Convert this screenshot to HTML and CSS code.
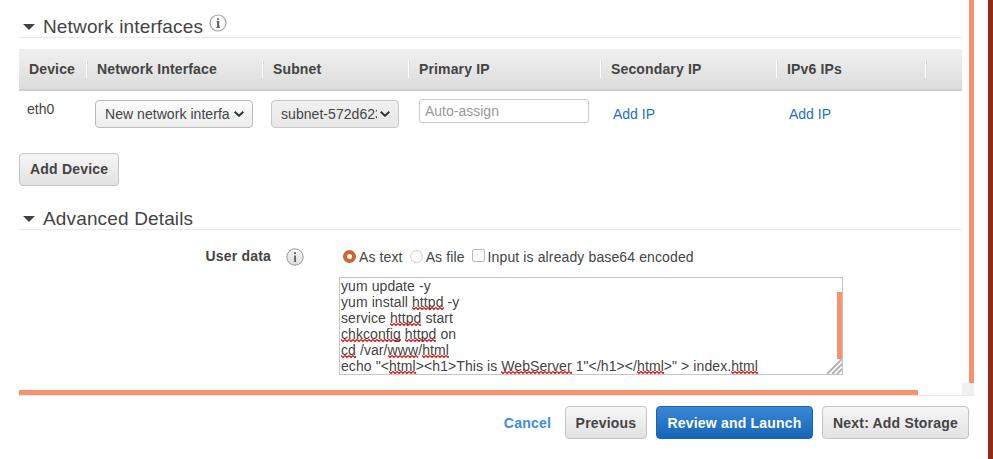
FILE: index.html
```html
<!DOCTYPE html>
<html lang="en">
<head>
<meta charset="utf-8">
<title>Configure Instance</title>
<link rel="stylesheet" href="styles.css">
</head>
<body>
<div class="edge"></div>
<main class="panel">
  <div class="content">
    <section class="net">
      <h2 class="section-title">
        <svg class="caret" width="12" height="6" viewBox="0 0 12 6"><path d="M0 0H12L6 6Z" fill="#444"/></svg>
        <span>Network interfaces</span>
        <svg class="title-info" width="18" height="18" viewBox="0 0 18 18"><circle cx="9" cy="9" r="8" fill="#fff" stroke="#a0a0a0" stroke-width="1.2"/><path d="M7.5 7.5H9.7V13.2H10.7M7.4 13.4H10.7" fill="none" stroke="#555" stroke-width="1"/><rect x="8.2" y="7.5" width="1.6" height="6" fill="#555"/><rect x="8.2" y="4.2" width="1.6" height="1.8" fill="#555"/></svg>
      </h2>
      <div class="grid head">
        <div class="th">Device</div>
        <div class="th sep">Network Interface</div>
        <div class="th sep">Subnet</div>
        <div class="th sep">Primary IP</div>
        <div class="th sep">Secondary IP</div>
        <div class="th sep">IPv6 IPs</div>
        <div class="th sep"></div>
      </div>
      <div class="grid row">
        <div class="td device">eth0</div>
        <div class="td"><select class="sel sel-net"><option>New network interface</option></select></div>
        <div class="td"><select class="sel sel-sub"><option>subnet-572d6231</option></select></div>
        <div class="td"><input class="ip" type="text" placeholder="Auto-assign"></div>
        <div class="td link-cell"><a class="link" href="#">Add IP</a></div>
        <div class="td link-cell"><a class="link" href="#">Add IP</a></div>
      </div>
      <button class="btn add-device" type="button">Add Device</button>
    </section>
    <section class="adv">
      <h2 class="section-title">
        <svg class="caret" width="12" height="6" viewBox="0 0 12 6"><path d="M0 0H12L6 6Z" fill="#444"/></svg>
        <span>Advanced Details</span>
      </h2>
      <div class="user-row">
        <div class="user-label">User data</div>
        <svg class="user-info" width="18" height="18" viewBox="0 0 18 18"><defs><linearGradient id="g" x1="0" y1="0" x2="0" y2="1"><stop offset="0" stop-color="#f6f6f6"/><stop offset="1" stop-color="#dcdcdc"/></linearGradient></defs><circle cx="9" cy="9" r="8.2" fill="url(#g)" stroke="#999"/><rect x="8.2" y="7.5" width="1.7" height="6.5" fill="#555"/><rect x="8.2" y="4.2" width="1.7" height="1.8" fill="#555"/></svg>
        <div class="user-main">
          <div class="choices">
            <span class="radio on"></span><span class="choice">As text</span>
            <span class="radio"></span><span class="choice">As file</span>
            <span class="check"></span><span class="choice">Input is already base64 encoded</span>
          </div>
          <div class="area">
            <div>yum update -y</div>
            <div>yum install <u>httpd</u> -y</div>
            <div>service <u>httpd</u> start</div>
            <div><u>chkconfig</u> <u>httpd</u> on</div>
            <div><u>cd</u> /var/<u>www</u>/<u>html</u></div>
            <div>echo "&lt;<u>html</u>&gt;&lt;h1&gt;This is <u>WebServer</u> 1"&lt;/h1&gt;&lt;/<u>html</u>&gt;" &gt; index.<u>html</u></div>
            <span class="area-thumb"></span>
            <svg class="resizer" width="15" height="15" viewBox="0 0 15 15"><path d="M15 0L0 15M15 5L5 15M15 10L10 15" stroke="#b4b4b4" stroke-width="2"/></svg>
          </div>
        </div>
      </div>
    </section>
  </div>
  <span class="vbar"></span>
  <span class="hbar"></span>
  <span class="corner"></span>
</main>
<footer class="actions">
  <a class="cancel" href="#">Cancel</a>
  <button class="btn prev" type="button">Previous</button>
  <button class="btn primary" type="button">Review and Launch</button>
  <button class="btn" type="button">Next: Add Storage</button>
</footer>
</body>
</html>
```
FILE: styles.css
```css
* { box-sizing: border-box; }
html, body { margin: 0; height: 100%; }
body {
  width: 993px;
  height: 459px;
  overflow: hidden;
  position: relative;
  background: #fff;
  color: #444;
  font: 14px/16px "Liberation Sans", Arial, sans-serif;
}
.edge {
  position: absolute;
  top: 0;
  right: 0;
  bottom: 0;
  width: 5px;
  background: #952c18;
}
.panel {
  position: relative;
  width: 974px;
  height: 396px;
  padding-left: 19px;
  overflow: hidden;
}
.panel::after {
  content: "";
  position: absolute;
  left: 19px;
  right: 0;
  bottom: 0;
  height: 1px;
  background: #e8e8e8;
}
.content { width: 943px; }
.section-title {
  display: flex;
  align-items: center;
  height: 38px;
  margin: 0;
  padding: 16px 0 0 4px;
  border-bottom: 1px solid #eaeaea;
  font-size: 19px;
  font-weight: 400;
  line-height: 22px;
  letter-spacing: .15px;
  color: #444;
}
.caret { margin: 0 8px 0 0; flex: none; }
.title-info { margin: -7px 0 0 6px; }
.grid {
  display: grid;
  grid-template-columns: 67px 176px 146px 192px 176px 149px 37px;
}
.head {
  height: 42px;
  margin-top: 11px;
  align-items: center;
  background: linear-gradient(#f0f0f0, #dcdcdc);
  border-bottom: 2px solid #cfcfcf;
}
.th {
  height: 18px;
  padding-left: 10px;
  font-weight: 700;
  line-height: 18px;
  color: #444;
  white-space: nowrap;
  letter-spacing: .14px;
}
.sep { padding-left: 10px; border-left: 1px solid #fff; box-shadow: inset 1px 0 0 #ddd; }
.row { height: 62px; padding-top: 8px; }
.td { padding-left: 9px; }
.device { padding: 2px 0 0 8px; }
.sel {
  display: block;
  appearance: none;
  -webkit-appearance: none;
  height: 28px;
  margin-top: 1px;
  padding: 0 22px 0 9px;
  border: 1px solid #bbb;
  border-radius: 4px;
  background-color: #f4f4f4;
  background-image: url("data:image/svg+xml,%3Csvg xmlns='http://www.w3.org/2000/svg' width='10' height='6' viewBox='0 0 10 6'%3E%3Cpath d='M.7 .7L5 4.8L9.3 .7' fill='none' stroke='%23333' stroke-width='1.9'/%3E%3C/svg%3E"), linear-gradient(#fcfcfc, #ececec);
  background-repeat: no-repeat, no-repeat;
  background-position: right 8px center, 0 0;
  color: #444;
  font: 14px "Liberation Sans", Arial, sans-serif;
  letter-spacing: .05px;
}
.sel-net { width: 158px; }
.sel-sub {
  width: 128px;
  border-color: #c8c8c8;
  padding-right: 21px;
  background-image: url("data:image/svg+xml,%3Csvg xmlns='http://www.w3.org/2000/svg' width='10' height='6' viewBox='0 0 10 6'%3E%3Cpath d='M.7 .7L5 4.8L9.3 .7' fill='none' stroke='%23333' stroke-width='1.9'/%3E%3C/svg%3E"), linear-gradient(#f0f0f0, #e8e8e8);
}
.td:nth-child(4) { padding-left: 11px; }
.ip {
  display: block;
  width: 170px;
  height: 24px;
  padding: 0 5px;
  border: 1px solid #ccc;
  border-radius: 3px;
  font: 14px "Liberation Sans", Arial, sans-serif;
}
.ip::placeholder { color: #999; opacity: 1; }
.link-cell { padding: 7px 0 0 13px; }
.link { color: #1f6fc0; text-decoration: none; }
.btn {
  height: 33px;
  padding: 0 10px;
  border: 1px solid #c4c4c4;
  border-radius: 4px;
  background: linear-gradient(#f6f6f6, #e2e2e2);
  color: #444;
  font: 700 14px/16px "Liberation Sans", Arial, sans-serif;
  letter-spacing: .2px;
  white-space: nowrap;
}
.add-device { display: block; width: 100px; padding-bottom: 1px; }
.adv .section-title { height: 44px; padding-top: 22px; }
.user-row {
  display: flex;
  padding-top: 17px;
}
.user-label {
  width: 252px;
  padding-top: 1px;
  text-align: right;
  font-weight: 700;
  letter-spacing: .2px;
  line-height: 16px;
}
.user-info { margin: 1px 0 0 15px; flex: none; }
.user-main { margin-left: 35px; }
.choices { display: flex; align-items: center; height: 20px; letter-spacing: .12px; }
.radio {
  width: 13px;
  height: 13px;
  margin: -2px 3px 0 4px;
  border: 1px solid #ccc;
  border-radius: 50%;
  background: #fdfdfd;
}
.radio.on {
  border: 4px solid #d2622f;
  background: #fff;
}
.check {
  width: 13px;
  height: 13px;
  margin: -3px 3px 0 4px;
  border: 1px solid #bbb;
  border-radius: 2px;
  background: #fdfdfd;
}
.choice { margin-right: 3px; }
.area {
  position: relative;
  width: 504px;
  height: 98px;
  margin-top: 10px;
  padding: 0 1px;
  border: 1px solid #c4c4c4;
  overflow: hidden;
  line-height: 16px;
  letter-spacing: .08px;
  white-space: nowrap;
}
.area u {
  text-decoration: none;
  background-image: url("data:image/svg+xml,%3Csvg xmlns='http://www.w3.org/2000/svg' width='4' height='3' viewBox='0 0 4 3'%3E%3Cpath d='M0 .5L2 2.5L4 .5' fill='none' stroke='%23e00' stroke-width='1.1'/%3E%3C/svg%3E");
  background-repeat: repeat-x;
  background-position: 0 100%;
  background-size: 4px 3px;
}
.area-thumb {
  position: absolute;
  top: 14px;
  right: 0;
  width: 5px;
  height: 67px;
  background: #f6936c;
}
.resizer { position: absolute; right: 0; bottom: 0; }
.vbar {
  position: absolute;
  top: 0;
  right: 0;
  width: 5px;
  height: 383px;
  background: #f6936c;
}
.hbar {
  position: absolute;
  left: 19px;
  bottom: 1px;
  width: 899px;
  height: 5px;
  background: #f6936c;
}
.corner {
  position: absolute;
  right: 0;
  bottom: 1px;
  width: 12px;
  height: 12px;
  background: #f0f0f0;
}
.actions {
  display: flex;
  align-items: center;
  justify-content: flex-end;
  gap: 9px;
  width: 969px;
  padding-top: 10px;
}
.cancel {
  margin-right: 5px;
  color: #3b8ee0;
  font-weight: 700;
  text-decoration: none;
  letter-spacing: .2px;
}
.prev { width: 82px; padding: 0; }
.primary {
  width: 157px;
  padding: 0;
  border-color: #1a62ad;
  background: linear-gradient(#3a87d6, #1565b8);
  color: #fff;
}
```
